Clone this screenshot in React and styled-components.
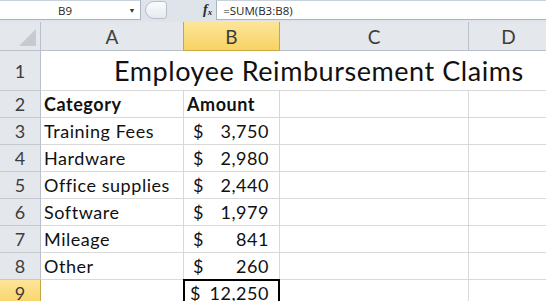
import React from "react";
import styled, { createGlobalStyle } from "styled-components";

const GlobalStyle = createGlobalStyle`
  html, body {
    margin: 0;
    padding: 0;
    background: #ffffff;
  }
  * {
    box-sizing: border-box;
  }
`;

const Window = styled.div`
  width: 546px;
  height: 301px;
  overflow: hidden;
  background: #ffffff;
  font-family: Lato, "Open Sans", sans-serif;
`;

const FormulaBar = styled.div`
  display: flex;
  align-items: stretch;
  height: 22px;
  background: #dfe4ea;
  border-bottom: 2px solid #dfe4ea;
  font-family: "Open Sans", "Noto Sans", sans-serif;
  font-size: 11.5px;
  color: #1e1e1e;
`;

const NameBox = styled.div`
  display: flex;
  align-items: center;
  width: 141px;
  background: #ffffff;
  border: 1px solid #a9b4c2;
  border-left: none;
  border-top-color: #c8d0da;
`;

const NameText = styled.span`
  flex: 1;
  text-align: center;
  padding-left: 6px;
`;

const Caret = styled.span`
  width: 16px;
  font-size: 7px;
  color: #333;
  text-align: center;
`;

const Splitter = styled.div`
  display: flex;
  align-items: center;
  width: 62px;
  padding-left: 4px;
`;

const Knob = styled.div`
  width: 22px;
  height: 18px;
  border-radius: 11px 4px 4px 11px;
  border: 1px solid #b5bec9;
  background: linear-gradient(#fbfcfd, #e6eaef);
`;

const FxLabel = styled.span`
  display: flex;
  align-items: center;
  font-family: "Liberation Serif", serif;
  font-style: italic;
  font-weight: bold;
  font-size: 14px;
  color: #2a2a2a;
  padding-right: 4px;
  & sub {
    font-size: 9px;
    vertical-align: baseline;
    position: relative;
    top: 2px;
  }
`;

const Formula = styled.div`
  flex: 1;
  display: flex;
  align-items: center;
  background: #ffffff;
  border: 1px solid #a9b4c2;
  border-top-color: #c8d0da;
  border-right: none;
  padding-left: 6px;
`;

const Sheet = styled.div`
  display: grid;
  grid-template-columns: 41px 143px 96px 189px 80px;
  grid-template-rows: 29px 40px repeat(8, 27px);
`;

const Corner = styled.div`
  position: relative;
  background: #e4e7ec;
  border-right: 1px solid #b9c0ca;
  border-bottom: 1px solid #b9c0ca;
  &::after {
    content: "";
    position: absolute;
    right: 4px;
    bottom: 4px;
    width: 0;
    height: 0;
    border-left: 17px solid transparent;
    border-bottom: 17px solid #c6cbd2;
  }
`;

const ColHead = styled.div`
  display: flex;
  align-items: center;
  justify-content: center;
  font-size: 19px;
  color: #3d3d3d;
  background: ${(p) =>
    p.active ? "linear-gradient(#fde59a, #f8d364)" : "#e4e7ec"};
  border-right: 1px solid ${(p) => (p.active ? "#c9a544" : "#b9c0ca")};
  border-left: ${(p) => (p.active ? "1px solid #c9a544" : "none")};
  border-bottom: 1px solid ${(p) => (p.active ? "#c9a544" : "#b9c0ca")};
  margin-left: ${(p) => (p.active ? "-1px" : "0")};
`;

const RowHead = styled.div`
  display: flex;
  align-items: center;
  justify-content: center;
  font-size: 18px;
  color: #3d3d3d;
  background: ${(p) =>
    p.active ? "linear-gradient(#fde59a, #f8d364)" : "#e4e7ec"};
  border-right: 1px solid ${(p) => (p.active ? "#c9a544" : "#b9c0ca")};
  border-bottom: 1px solid #c3c9d1;
`;

const Cell = styled.div`
  display: flex;
  align-items: center;
  padding: 0 3px;
  font-size: 18px;
  letter-spacing: 0.55px;
  color: #111;
  white-space: nowrap;
  font-weight: ${(p) => (p.bold ? 700 : 400)};
  border-right: 1px solid #d9d9d9;
  border-bottom: 1px solid #d9d9d9;
`;

const TitleCell = styled.div`
  grid-column: 2 / 6;
  display: flex;
  align-items: center;
  padding-left: 73px;
  font-size: 27px;
  letter-spacing: 0.55px;
  color: #111;
  white-space: nowrap;
  border-bottom: 1px solid #d9d9d9;
`;

const Money = styled(Cell)`
  justify-content: space-between;
  padding: 0 10px 0 9px;
`;

const Total = styled(Money)`
  border: 2px solid #000;
  margin: -1px 0 0 -1px;
  padding: 1px 9px 0 5px;
  align-items: flex-start;
`;

const columns = ["A", "B", "C", "D"];

const rows = [
  { cat: "Training Fees", amt: "3,750" },
  { cat: "Hardware", amt: "2,980" },
  { cat: "Office supplies", amt: "2,440" },
  { cat: "Software", amt: "1,979" },
  { cat: "Mileage", amt: "841" },
  { cat: "Other", amt: "260" },
];

export default function App() {
  return (
    <Window>
      <GlobalStyle />
      <FormulaBar>
        <NameBox>
          <NameText>B9</NameText>
          <Caret>▼</Caret>
        </NameBox>
        <Splitter>
          <Knob />
        </Splitter>
        <FxLabel>
          f<sub>x</sub>
        </FxLabel>
        <Formula>=SUM(B3:B8)</Formula>
      </FormulaBar>
      <Sheet>
        <Corner />
        {columns.map((c) => (
          <ColHead key={c} active={c === "B"}>
            {c}
          </ColHead>
        ))}

        <RowHead>1</RowHead>
        <TitleCell>Employee Reimbursement Claims</TitleCell>

        <RowHead>2</RowHead>
        <Cell bold>Category</Cell>
        <Cell bold>Amount</Cell>
        <Cell />
        <Cell />

        {rows.map((r, i) => (
          <React.Fragment key={r.cat}>
            <RowHead>{i + 3}</RowHead>
            <Cell>{r.cat}</Cell>
            <Money>
              <span>$</span>
              <span>{r.amt}</span>
            </Money>
            <Cell />
            <Cell />
          </React.Fragment>
        ))}

        <RowHead active>9</RowHead>
        <Cell />
        <Total>
          <span>$</span>
          <span>12,250</span>
        </Total>
        <Cell />
        <Cell />
      </Sheet>
    </Window>
  );
}
